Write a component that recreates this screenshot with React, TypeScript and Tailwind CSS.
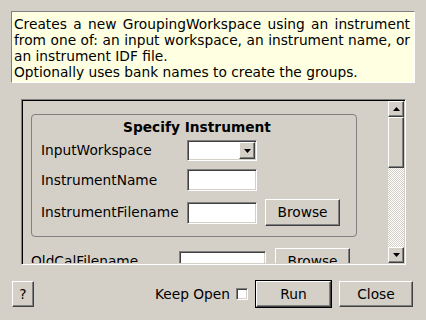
import React from 'react'

const raised =
  'bg-[#d4d0c8] border border-t-white border-l-white border-b-[#404040] border-r-[#404040] shadow-[inset_-1px_-1px_#808080]'
const sunken =
  'bg-white border border-t-[#808080] border-l-[#808080] border-b-white border-r-white shadow-[inset_1px_1px_#404040,inset_-1px_-1px_#d4d0c8]'

const Arrow = ({ down }: { down?: boolean }) => (
  <svg width="7" height="4" viewBox="0 0 7 4">
    {down ? <polygon points="0,0 7,0 3.5,4" fill="#000" /> : <polygon points="0,4 7,4 3.5,0" fill="#000" />}
  </svg>
)

const Button = ({ label, className }: { label: string; className: string }) => (
  <div className={`${raised} ${className} flex items-center justify-center`}>{label}</div>
)

const App = () => {
  return (
    <div
      className="w-[426px] h-[320px] bg-[#d4d0c8] text-[13.75px] text-black overflow-hidden flex flex-col"
      style={{ fontFamily: '"DejaVu Sans", sans-serif' }}
    >
      {/* description */}
      <div className="mt-[11px] ml-[11px] w-[404px] h-[72px] bg-[#ffffe1] border border-t-[#808080] border-l-[#808080] border-b-white border-r-white pt-[4px] pl-[2px] pr-[4px] leading-[16px]">
        <p className="text-justify [text-align-last:left]">
          Creates a new GroupingWorkspace using an instrument from one of: an input workspace, an instrument name, or an
          instrument IDF file.
        </p>
        <p>Optionally uses bank names to create the groups.</p>
      </div>

      {/* scroll area */}
      <div className="mt-[16px] ml-[21px] w-[385px] h-[166px] flex border border-t-[#808080] border-l-[#808080] border-b-white border-r-white shadow-[inset_1px_1px_#000000,inset_-1px_-1px_#d4d0c8] p-[1px]">
        <div className="flex-1 overflow-hidden flex flex-col">
          <div className="mt-[13px] ml-[8px] w-[326px] h-[123px] shrink-0 border border-[#808080] rounded-[4px] flex flex-col">
            <div className="mt-[4px] h-[16px] leading-[16px] text-center font-bold pl-[6px]">Specify Instrument</div>
            <div className="mt-[5px] h-[21px] flex items-center pl-[9px]">
              <div className="w-[146px]">InputWorkspace</div>
              <div className={`${sunken} w-[70px] h-[21px] flex justify-end p-[1px]`}>
                <div className={`${raised} w-[16px] h-full flex items-center justify-center`}>
                  <Arrow down />
                </div>
              </div>
            </div>
            <div className="mt-[8px] h-[22px] flex items-center pl-[9px]">
              <div className="w-[146px]">InstrumentName</div>
              <div className={`${sunken} w-[70px] h-[22px]`} />
            </div>
            <div className="mt-[8px] h-[27px] flex items-center pl-[9px]">
              <div className="w-[146px]">InstrumentFilename</div>
              <div className={`${sunken} w-[70px] h-[22px]`} />
              <Button label="Browse" className="ml-[8px] w-[75px] h-[27px]" />
            </div>
          </div>
          <div className="mt-[11px] ml-[8px] h-[27px] shrink-0 flex items-center">
            <div className="w-[148px]">OldCalFilename</div>
            <div className={`${sunken} w-[87px] h-[22px]`} />
            <Button label="Browse" className="ml-[9px] w-[75px] h-[27px]" />
          </div>
        </div>
        {/* scrollbar */}
        <div className="w-[16px] flex flex-col">
          <div className={`${raised} h-[16px] flex items-center justify-center`}>
            <Arrow />
          </div>
          <div className={`${raised} h-[51px]`} />
          <div className="flex-1 bg-[repeating-conic-gradient(#ffffff_0_25%,#d4d0c8_0_50%)] bg-[length:2px_2px]" />
          <div className={`${raised} h-[16px] flex items-center justify-center`}>
            <Arrow down />
          </div>
        </div>
      </div>

      {/* bottom bar */}
      <div className="mt-[15px] h-[28px] flex items-center pl-[12px] pr-[13px]">
        <Button label="?" className="w-[22px] h-[26px]" />
        <div className="flex-1" />
        <span>Keep Open</span>
        <div className={`${sunken} ml-[6px] w-[12px] h-[12px]`} />
        <div className="ml-[7px] w-[77px] h-[28px] border border-black">
          <Button label="Run" className="w-full h-full" />
        </div>
        <Button label="Close" className="ml-[7px] w-[74px] h-[26px]" />
      </div>
    </div>
  )
}

export default App
